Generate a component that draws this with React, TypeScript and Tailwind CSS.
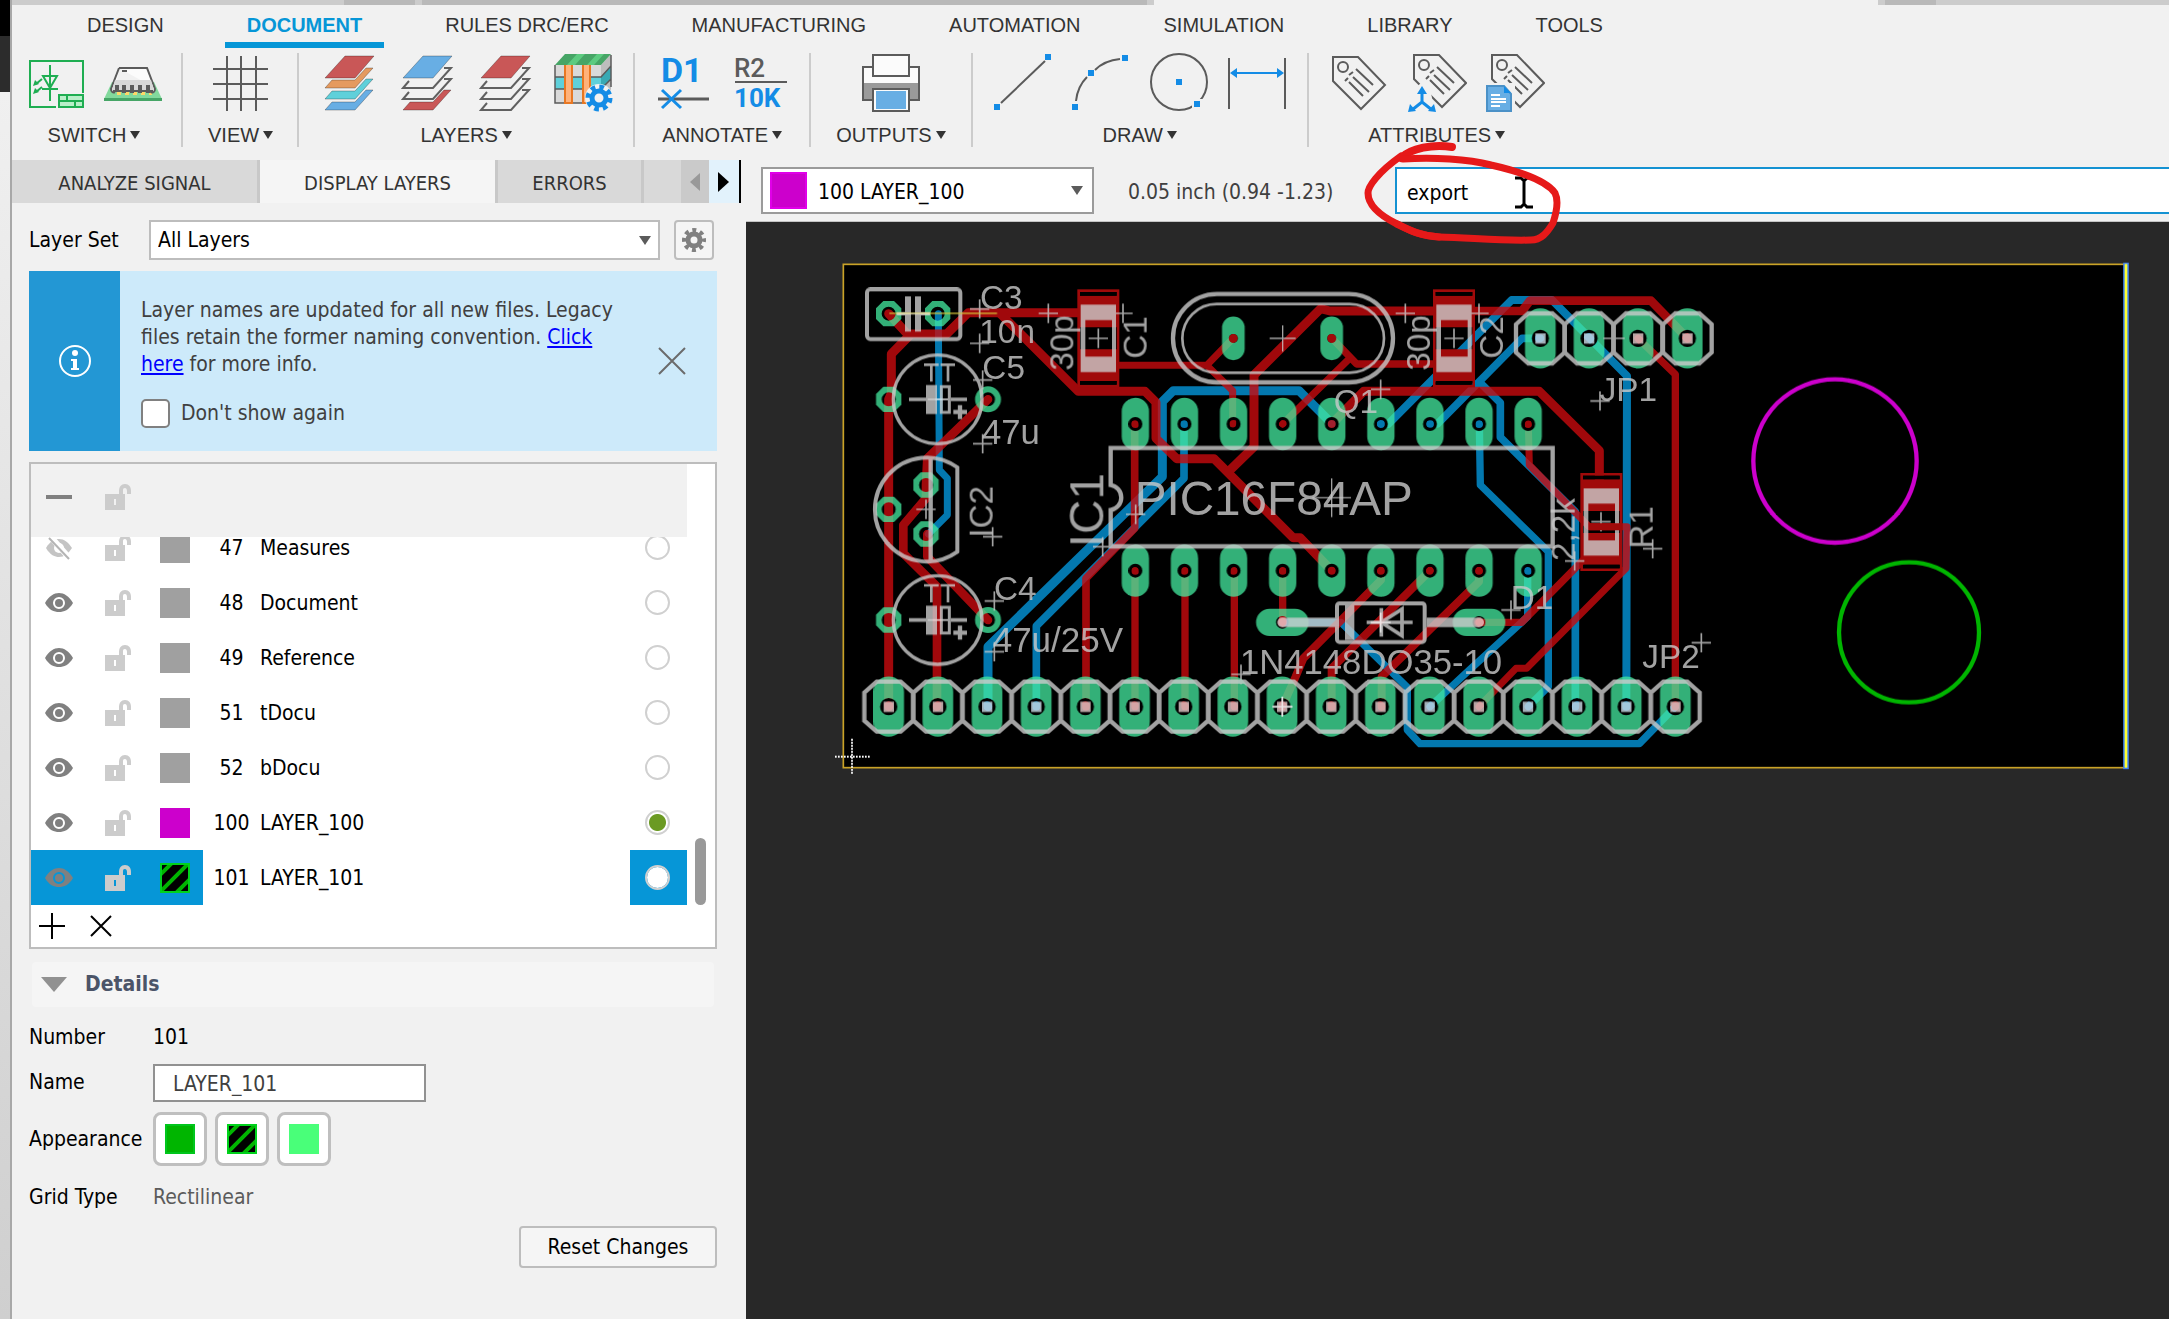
import type { ReactNode } from "react";
import clsx from "clsx";

const UI_FONT = "font-['DejaVu_Sans_Condensed','Noto_Sans',sans-serif]";
const RIBBON_FONT = "font-['Liberation_Sans',sans-serif]";

const ribbonTabs = [
  "DESIGN",
  "DOCUMENT",
  "RULES DRC/ERC",
  "MANUFACTURING",
  "AUTOMATION",
  "SIMULATION",
  "LIBRARY",
  "TOOLS",
];

const layers = [
  { id: 47, name: "Measures", color: "bg-[#a0a0a0]", hidden: true },
  { id: 48, name: "Document", color: "bg-[#a0a0a0]" },
  { id: 49, name: "Reference", color: "bg-[#a0a0a0]" },
  { id: 51, name: "tDocu", color: "bg-[#a0a0a0]" },
  { id: 52, name: "bDocu", color: "bg-[#a0a0a0]" },
  { id: 100, name: "LAYER_100", color: "bg-[#cc00cc]", active: true },
  { id: 101, name: "LAYER_101", color: "", selected: true },
];

/* ---------- Ribbon icons ---------- */

function Icon({ children }: { children: ReactNode }) {
  return (
    <svg viewBox="0 0 60 60" className="block size-[60px]" fill="none" aria-hidden="true">
      {children}
    </svg>
  );
}

function SchematicIcon() {
  return (
    <Icon>
      <g stroke="#1fae52" strokeWidth="2">
        <path d="M31 54H5V8H58V40" />
        <path d="M25 12V48M17 36H33M18 23H32L25 35Z" />
        <rect x="34" y="42" width="24" height="12" fill="#b9efc9" />
        <path d="M34 48H58M42 42V48M50 48V54" />
        <path d="M17 26L11 31M17 34L11 39" />
      </g>
      <path d="M8 33L10 27L14 31ZM8 41L10 35L14 39Z" fill="#1fae52" />
    </Icon>
  );
}

function BoardIcon() {
  return (
    <Icon>
      <path d="M9 29H51L59 46V48H1V46Z" fill="#82d99c" />
      <path d="M1 45H59V48H1Z" fill="#46a566" />
      <path d="M14 36V42H18V36M22 36V42H26V36M30 36V42H34V36M38 36V42H42V36M46 36V42H49V36" fill="#ffd766" />
      <path
        d="M16 15H44L52 36C52 39 50 40 48 39V33M16 15L8 36C8 39 10 40 12 39"
        fill="#fbfbfb"
        stroke="#5b5b5b"
        strokeWidth="2"
      />
      <path d="M12 27H48L51 37H9Z" fill="#d8d8d8" />
      <path d="M14 32V39M21 32V40M29 32V40M37 32V40M45 32V40" stroke="#5b5b5b" strokeWidth="4" />
      <path d="M10 38H50" stroke="#5b5b5b" strokeWidth="2" />
      <path d="M19 18H24" stroke="#5b5b5b" strokeWidth="2" />
    </Icon>
  );
}

function GridIcon() {
  return (
    <Icon>
      <path d="M16 3V58M30 3V58M45 3V58M2 16H57M2 31H57M2 46H57" stroke="#5b5b5b" strokeWidth="2" />
    </Icon>
  );
}

const SHEET_LINE = "#606060";

function LayersIcon({ fills }: { fills: string[] }) {
  const [top, ...rest] = fills;
  return (
    <Icon>
      {rest.map((fill, i) => (
        <path
          key={i}
          transform={`translate(0 ${i * 11})`}
          d={
            fill === "none"
              ? "M12 28L6 35H36L54 15H47"
              : "M13 27L6 35H36L54 15H47L36 27Z"
          }
          fill={fill}
          stroke={fill === "none" ? SHEET_LINE : "#00000044"}
          strokeWidth={fill === "none" ? 2 : 1}
        />
      ))}
      <path d="M6 25L26 3H55L36 25Z" fill={top} stroke="#00000044" strokeWidth="1" />
    </Icon>
  );
}

function StackIcon() {
  return (
    <Icon>
      <path d="M2 12H48V50H2Z" fill="#d9d9d9" />
      <path d="M48 12L58 1V38L48 50Z" fill="#bdbdbd" />
      <path d="M2 24H48V36H2Z" fill="#5fd0da" />
      <path d="M48 24L58 13V26L48 36Z" fill="#39a9b4" />
      <path d="M2 12V50H48M2 24H48L58 13M2 36H48L58 26M58 2V34" stroke="#5b5b5b" strokeWidth="1.5" />
      <path d="M12 12V50H19V12M30 12V50H37V12" fill="#ffb27a" stroke="#e87722" strokeWidth="2" />
      <path d="M2 12L12 1H58L48 12Z" fill="#46a566" />
      <path d="M14 12L24 1H32L22 12ZM34 12L44 1H51L41 12Z" fill="#5ccb80" />
      <circle cx="46" cy="45" r="14" fill="#f1f1f1" />
      <circle cx="46" cy="45" r="7" stroke="#148ce6" strokeWidth="5" />
      <circle cx="46" cy="45" r="11" stroke="#148ce6" strokeWidth="5" strokeDasharray="4.6 4.04" />
    </Icon>
  );
}

function NameIcon() {
  return (
    <Icon>
      <text x="8" y="29" fontFamily="Roboto, sans-serif" fontSize="34" fontWeight="700" fill="#148ce6">
        D1
      </text>
      <path d="M5 46H56" stroke="#5b5b5b" strokeWidth="3" />
      <path d="M9 37L28 55M28 37L9 55" stroke="#148ce6" strokeWidth="3" />
    </Icon>
  );
}

function ValueIcon() {
  return (
    <Icon>
      <text x="3" y="24" fontFamily="Roboto, sans-serif" fontSize="26" fontWeight="500" fill="#5b5b5b">
        R2
      </text>
      <path d="M4 29H56" stroke="#5b5b5b" strokeWidth="2" />
      <text x="3" y="54" fontFamily="Roboto, sans-serif" fontSize="26" fontWeight="700" fill="#148ce6">
        10K
      </text>
    </Icon>
  );
}

function PrinterIcon() {
  return (
    <Icon>
      <path d="M2 14H58V47H2Z" fill="#fbfbfb" />
      <path d="M2 30H58V47H2Z" fill="#9a9a9a" />
      <path d="M12 14H2V47H12M48 47H58V14H48" stroke="#5b5b5b" strokeWidth="2" />
      <rect x="12" y="2" width="36" height="21" fill="#fbfbfb" stroke="#5b5b5b" strokeWidth="2" />
      <rect x="12" y="36" width="36" height="22" fill="#fbfbfb" stroke="#5b5b5b" strokeWidth="2" />
      <rect x="15" y="38" width="30" height="18" fill="#68aee4" />
    </Icon>
  );
}

function LineIcon() {
  return (
    <Icon>
      <path d="M8 50L52 8" stroke="#5b5b5b" strokeWidth="2" />
      <path d="M1 51H7V57H1ZM52 1H58V7H52Z" fill="#148ce6" />
    </Icon>
  );
}

function ArcIcon() {
  return (
    <Icon>
      <path d="M5 48C6 38 10 30 16 24M24 17C30 11 38 7 49 6" stroke="#5b5b5b" strokeWidth="2" />
      <path d="M1 51H7V57H1ZM17 17H23V23H17ZM51 2H57V8H51Z" fill="#148ce6" />
    </Icon>
  );
}

function CircleIcon() {
  return (
    <Icon>
      <circle cx="30" cy="29" r="28" stroke="#5b5b5b" strokeWidth="2" />
      <rect x="43" y="46" width="11" height="11" fill="#f1f1f1" />
      <path d="M27 26H33V32H27ZM45 48H51V54H45Z" fill="#148ce6" />
    </Icon>
  );
}

function DimensionIcon() {
  return (
    <Icon>
      <path d="M2 5V56M58 5V56" stroke="#5b5b5b" strokeWidth="2" />
      <path d="M6 20H54" stroke="#148ce6" strokeWidth="2" />
      <path d="M3 20L10 15V25ZM57 20L50 15V25Z" fill="#148ce6" />
    </Icon>
  );
}

function TagShape() {
  return (
    <g stroke="#5b5b5b" strokeWidth="2">
      <path d="M4 4H29L56 32L32 56L4 28Z" />
      <circle cx="14" cy="14" r="5" />
      <path d="M27 16L44 32M20 22L24 19M16 28L19 25M24 24L40 39M20 29L34 43" />
    </g>
  );
}

function TagIcon() {
  return (
    <Icon>
      <TagShape />
    </Icon>
  );
}

function TagTreeIcon() {
  return (
    <Icon>
      <g transform="translate(3 -2)">
        <TagShape />
      </g>
      <path d="M3 40L14 30L24 40L28 60H0Z" fill="#f1f1f1" />
      <path d="M15 38V49L5 57M15 49L25 57" stroke="#148ce6" strokeWidth="3" />
      <path d="M15 33L20 41H10ZM1 59L3 51L9 58ZM29 59L27 51L21 58Z" fill="#148ce6" />
    </Icon>
  );
}

function TagDocIcon() {
  return (
    <Icon>
      <g transform="translate(3 -2)">
        <TagShape />
      </g>
      <path d="M0 30H30V60H0Z" fill="#f1f1f1" />
      <path d="M2 33H19L26 41V58H2Z" fill="#68aee4" stroke="#4b91c7" strokeWidth="2" />
      <path d="M19 33L26 40H19Z" fill="#148ce6" />
      <path d="M6 42H15M6 46H21M6 49H21M6 53H15" stroke="#ffffff" strokeWidth="2" />
    </Icon>
  );
}

/* ---------- Ribbon ---------- */

function RibbonGroup({
  label,
  className,
  children,
}: {
  label: string;
  className: string;
  children: ReactNode;
}) {
  return (
    <section className={clsx("flex flex-col items-center", className)}>
      <div className="flex gap-[18px]">{children}</div>
      <button
        type="button"
        className="mt-[10px] flex items-center gap-1 text-[20px] leading-6 text-[#333]"
      >
        {label}
        <span className="border-x-[5px] border-t-8 border-x-transparent border-t-[#333]" />
      </button>
    </section>
  );
}

function Tool({ label, children }: { label: string; children: ReactNode }) {
  return (
    <button type="button" aria-label={label} className="block">
      {children}
    </button>
  );
}

function Ribbon() {
  return (
    <header className={clsx("bg-[#f1f1f1]", RIBBON_FONT)}>
      {/* Bottom edge of the document tabs above the ribbon */}
      <div className="flex h-[5px]">
        <div className="w-[332px] bg-[#cccccc]" />
        <div className="w-[71px] bg-[#b9b9b9]" />
        <div className="w-[7px] bg-[#cccccc]" />
        <div className="w-[725px] bg-[#b9b9b9]" />
        <div className="w-[7px] bg-[#cccccc]" />
        <div className="w-[724px]" />
        <div className="w-[7px] bg-[#cccccc]" />
        <div className="w-[51px] bg-[#b9b9b9]" />
        <div className="flex-1 bg-[#cccccc]" />
      </div>

      <nav className="flex h-[43px] gap-[39px] pl-[53px]">
        {ribbonTabs.map((tab) => (
          <button
            key={tab}
            type="button"
            className={clsx(
              "shrink-0 border-b-[6px] px-[22px] pt-[2px] text-[20px] leading-6",
              tab === "DOCUMENT"
                ? "border-[#0696d7] font-bold text-[#0696d7]"
                : "border-transparent text-[#333]"
            )}
          >
            {tab}
          </button>
        ))}
      </nav>

      <div className="mt-[5px] mb-[13px] flex h-[94px] divide-x-2 divide-[#cccccc]">
        <RibbonGroup label="SWITCH" className="pr-[18px] pl-[13px]">
          <Tool label="Switch to schematic">
            <SchematicIcon />
          </Tool>
          <Tool label="Switch to 3D board">
            <BoardIcon />
          </Tool>
        </RibbonGroup>
        <RibbonGroup label="VIEW" className="pr-6 pl-[25px]">
          <Tool label="Grid">
            <GridIcon />
          </Tool>
        </RibbonGroup>
        <RibbonGroup label="LAYERS" className="px-5">
          <Tool label="All layers">
            <LayersIcon fills={["#c95757", "#e59a5f", "#5fd0da", "#68aee4"]} />
          </Tool>
          <Tool label="Bottom layer">
            <LayersIcon fills={["#68aee4", "none", "none", "#c95757"]} />
          </Tool>
          <Tool label="Top layer">
            <LayersIcon fills={["#c95757", "none", "none", "none"]} />
          </Tool>
          <Tool label="Layer stack">
            <StackIcon />
          </Tool>
        </RibbonGroup>
        <RibbonGroup label="ANNOTATE" className="px-[18px]">
          <Tool label="Name">
            <NameIcon />
          </Tool>
          <Tool label="Value">
            <ValueIcon />
          </Tool>
        </RibbonGroup>
        <RibbonGroup label="OUTPUTS" className="px-[25px]">
          <Tool label="Print">
            <PrinterIcon />
          </Tool>
        </RibbonGroup>
        <RibbonGroup label="DRAW" className="px-5">
          <Tool label="Line">
            <LineIcon />
          </Tool>
          <Tool label="Arc">
            <ArcIcon />
          </Tool>
          <Tool label="Circle">
            <CircleIcon />
          </Tool>
          <Tool label="Dimension">
            <DimensionIcon />
          </Tool>
        </RibbonGroup>
        <RibbonGroup label="ATTRIBUTES" className="px-5">
          <Tool label="Attribute">
            <TagIcon />
          </Tool>
          <Tool label="Global attributes">
            <TagTreeIcon />
          </Tool>
          <Tool label="Attribute document">
            <TagDocIcon />
          </Tool>
        </RibbonGroup>
      </div>
    </header>
  );
}

/* ---------- Layer panel ---------- */

function Caret({ className }: { className?: string }) {
  return (
    <span
      className={clsx(
        "pointer-events-none border-x-[6px] border-t-[9px] border-x-transparent border-t-[#5b5b5b]",
        className
      )}
    />
  );
}

function EyeIcon({ hidden }: { hidden?: boolean }) {
  if (hidden) {
    return (
      <svg viewBox="0 0 30 30" className="block size-[30px]" fill="none" aria-hidden="true">
        <path d="M2 15C6 8 11 6 15 6C20 6 24 9 28 15C24 21 20 24 15 24C11 24 6 22 2 15Z" fill="#c4c4c4" />
        <circle cx="15" cy="15" r="5" fill="#fff" />
        <path d="M6 3L27 27" stroke="#fff" strokeWidth="6" />
        <path d="M5 5L25 26" stroke="#b4b4b4" strokeWidth="2" />
      </svg>
    );
  }
  return (
    <svg viewBox="0 0 30 30" className="block size-[30px]" aria-hidden="true">
      <path
        d="M1 15C5 8 10 5 15 5S25 8 29 15C25 22 20 24 15 24S5 22 1 15ZM15 9A6 6 0 1 0 15 21A6 6 0 1 0 15 9ZM15 11A4 4 0 1 1 15 19A4 4 0 1 1 15 11Z"
        fill="#808080"
        fillRule="evenodd"
      />
    </svg>
  );
}

function LockIcon() {
  return (
    <svg viewBox="0 0 26 26" className="block size-[26px]" aria-hidden="true">
      <path
        d="M0 10H14V7C14 3 16 0 20 0C24 0 26 3 26 7V10H22V7C22 5 21 4 20 4C18 4 18 5 18 7V10H20V26H0ZM9 15V21H11V15Z"
        fill="#cccccc"
        fillRule="evenodd"
      />
    </svg>
  );
}

function HatchSwatch() {
  return (
    <svg viewBox="0 0 30 30" className="block size-[30px]" aria-hidden="true">
      <rect width="30" height="30" />
      <path d="M-2 14L14 -2M-2 31L31 -2M14 32L32 14" stroke="#00b500" strokeWidth="4" />
      <rect x="1" y="1" width="28" height="28" fill="none" stroke="#00d21c" strokeWidth="2" />
    </svg>
  );
}

function GearIcon() {
  return (
    <svg viewBox="0 0 24 24" className="block size-6" fill="none" aria-hidden="true">
      <circle cx="12" cy="12" r="6" stroke="#808080" strokeWidth="5" />
      <circle cx="12" cy="12" r="10" stroke="#808080" strokeWidth="4" strokeDasharray="4 3.85" strokeDashoffset="2" />
    </svg>
  );
}

function PanelTabs() {
  return (
    <div className="flex h-[43px] bg-[#d9d9d9] text-[20px] leading-[43px] text-[#333]">
      <button type="button" className="w-[248px] border-r-[3px] border-[#c8c8c8] bg-[#d9d9d9] pt-[2px]">
        ANALYZE SIGNAL
      </button>
      <button type="button" className="w-[235px] bg-[#f5f5f5] pt-[2px]">
        DISPLAY LAYERS
      </button>
      <button type="button" className="w-[149px] border-x-[3px] border-[#c8c8c8] pt-[2px]">
        ERRORS
      </button>
      <div className="flex-1" />
      <button
        type="button"
        aria-label="Scroll tabs left"
        className="flex w-7 items-center justify-center bg-[#cacaca]"
      >
        <span className="border-y-[9px] border-r-[10px] border-y-transparent border-r-[#999]" />
      </button>
      <button
        type="button"
        aria-label="Scroll tabs right"
        className="flex w-8 items-center border-r-2 border-black bg-[#e2f2fc] pl-[9px]"
      >
        <span className="border-y-[10px] border-l-[11px] border-y-transparent border-l-black" />
      </button>
      <div className="w-[5px] bg-[#f1f1f1]" />
    </div>
  );
}

function LayerRow({ layer }: { layer: (typeof layers)[number] }) {
  const tint = layer.selected ? "bg-[#0696d7]" : "";
  return (
    <tr className="h-[55px]">
      <td className={clsx("w-[74px] pl-[13px]", tint)}>
        <button type="button" aria-label={`Toggle visibility of ${layer.name}`} className="block">
          <EyeIcon hidden={layer.hidden} />
        </button>
      </td>
      <td className={clsx("w-[55px]", tint)}>
        <button type="button" aria-label={`Lock ${layer.name}`} className="block">
          <LockIcon />
        </button>
      </td>
      <td className={clsx("w-[43px]", tint)}>
        {layer.selected ? <HatchSwatch /> : <div className={clsx("size-[30px]", layer.color)} />}
      </td>
      <td className="w-[57px] pt-[2px] text-center">{layer.id}</td>
      <td className="pt-[2px]">{layer.name}</td>
      <td className={clsx("w-[57px] pr-[2px]", tint)}>
        <input
          type="radio"
          name="active-layer"
          aria-label={`Use ${layer.name}`}
          defaultChecked={layer.active}
          className="mx-auto block size-[25px] appearance-none rounded-full border-2 border-[#d0d0d0] bg-white bg-clip-padding checked:bg-[radial-gradient(circle,#6b9a23_8px,white_9px)]"
        />
      </td>
    </tr>
  );
}

function InfoBanner() {
  return (
    <div className="mt-[11px] flex h-[180px] bg-[#cdeafa]">
      <div className="flex w-[91px] items-center justify-center bg-[#2397d4]">
        <svg viewBox="0 0 34 34" className="size-[34px]" fill="none" aria-hidden="true">
          <circle cx="17" cy="17" r="15" stroke="#fff" strokeWidth="2" />
          <circle cx="17" cy="9" r="3" fill="#fff" />
          <path d="M13 15H19V24H21V26H13V24H15V17H13Z" fill="#fff" />
        </svg>
      </div>
      <div className="flex-1 pt-[26px] pl-[21px] text-[#404040]">
        <p className="max-w-[488px] leading-[27px]">
          Layer names are updated for all new files. Legacy files retain the former naming
          convention.{" "}
          <a href="#naming" className="text-[#0000ff] underline">
            Click here
          </a>{" "}
          for more info.
        </p>
        <label className="mt-5 flex items-center gap-[11px] leading-[30px]">
          <input
            type="checkbox"
            className="size-[29px] appearance-none rounded-[5px] border-2 border-[#808080] bg-white"
          />
          Don't show again
        </label>
      </div>
      <button type="button" aria-label="Close" className="mr-[31px]">
        <svg viewBox="0 0 28 28" className="size-7" aria-hidden="true">
          <path d="M1 1L27 27M27 1L1 27" stroke="#6b6b6b" strokeWidth="2" />
        </svg>
      </button>
    </div>
  );
}

function LayerTable() {
  return (
    <div className="mt-[11px] border-2 border-[#bdbdbd] bg-white">
      <div className="flex text-black">
        <div className="flex-1">
          <div className="flex h-[73px] items-center bg-[#f1f1f1] pl-[15px]">
            <button type="button" aria-label="Hide all" className="-mt-2 h-1 w-[26px] bg-[#808080]" />
            <button type="button" aria-label="Unlock all" className="-mt-2 ml-[33px]">
              <LockIcon />
            </button>
          </div>
          {/* Scrolled to the end of the list */}
          <div className="flex h-[368px] flex-col justify-end overflow-hidden">
            <table className="w-full shrink-0 border-collapse">
              <tbody>
                {layers.map((layer) => (
                  <LayerRow key={layer.id} layer={layer} />
                ))}
              </tbody>
            </table>
          </div>
        </div>
        <div className="flex w-7 flex-col justify-end pl-2">
          <div className="h-[67px] w-[11px] rounded-full bg-[#999]" />
        </div>
      </div>
      <div className="flex h-[42px] items-center gap-[25px] pl-2">
        <button type="button" aria-label="Add layer">
          <svg viewBox="0 0 26 26" className="block size-[26px]" aria-hidden="true">
            <path d="M13 0V26M0 13H26" stroke="#000" strokeWidth="2" />
          </svg>
        </button>
        <button type="button" aria-label="Delete layer">
          <svg viewBox="0 0 22 22" className="block size-[22px]" aria-hidden="true">
            <path d="M1 1L21 21M21 1L1 21" stroke="#000" strokeWidth="2" />
          </svg>
        </button>
      </div>
    </div>
  );
}

function Details() {
  const swatch =
    "flex size-[54px] items-center justify-center rounded-lg border-[3px] border-[#bfbfbf] bg-white";
  return (
    <section>
      <button
        type="button"
        className="mx-[3px] mt-[13px] flex h-[45px] w-[682px] items-center gap-[18px] rounded bg-[#f5f5f5] pl-[9px] font-bold text-[#4b5468]"
      >
        <span className="border-x-[13px] border-t-[15px] border-x-transparent border-t-[#919191]" />
        Details
      </button>
      <div className="mt-[14px] grid grid-cols-[124px_1fr] items-center text-black">
        <span className="leading-8">Number</span>
        <span className="leading-8">101</span>
        <label htmlFor="layer-name" className="mt-[11px]">
          Name
        </label>
        <input
          id="layer-name"
          defaultValue="LAYER_101"
          className="mt-[11px] h-[38px] w-[273px] border-2 border-[#919191] bg-white px-[18px] pt-[2px] text-[#404040]"
        />
        <span className="mt-[11px]">Appearance</span>
        <div className="mt-[10px] flex gap-2">
          <button type="button" aria-label="Solid" className={swatch}>
            <div className="size-[30px] border-2 border-[#00c61c] bg-[#00b500]" />
          </button>
          <button type="button" aria-label="Hatched" className={swatch}>
            <HatchSwatch />
          </button>
          <button type="button" aria-label="Light" className={swatch}>
            <div className="size-[30px] bg-[#49ff79]" />
          </button>
        </div>
        <span className="mt-[15px] leading-8">Grid Type</span>
        <span className="mt-[15px] leading-8 text-[#5b5b5b]">Rectilinear</span>
      </div>
      <div className="mt-[13px] flex justify-end">
        <button
          type="button"
          className="h-[42px] w-[198px] rounded-sm border-2 border-[#bdbdbd] bg-[#f5f5f5] pt-[2px] text-black"
        >
          Reset Changes
        </button>
      </div>
    </section>
  );
}

function LayerPanel() {
  return (
    <aside className="w-[734px] shrink-0 bg-[#f1f1f1]">
      <PanelTabs />
      <div className="pt-[17px] pr-[29px] pl-[17px] text-[21px]">
        <div className="flex items-center pr-[3px]">
          <label htmlFor="layer-set" className="w-[120px] pt-[2px] text-black">
            Layer Set
          </label>
          <div className="relative flex-1">
            <select
              id="layer-set"
              className="block h-10 w-full appearance-none border-2 border-[#bdbdbd] bg-white px-[7px] pt-[2px] text-black"
            >
              <option>All Layers</option>
            </select>
            <Caret className="absolute top-4 right-[9px]" />
          </div>
          <button
            type="button"
            aria-label="Layer set options"
            className="ml-[14px] flex size-10 items-center justify-center rounded-sm border-2 border-[#bdbdbd] bg-[#f5f5f5]"
          >
            <GearIcon />
          </button>
        </div>
        <InfoBanner />
        <LayerTable />
        <Details />
      </div>
    </aside>
  );
}

/* ---------- Board drawing ---------- */

const bluePaths = [
  { w: 21, d: "M325 191L328 660L352 685V795L295 852" },
  { w: 27, d: "M474 1370V1190L997 680V455L1030 422H1407L1505 520" },
  { w: 23, d: "M619 1370V1128L1062 685V522" },
  { w: 24, d: "M1652 522H1675L2045 150H2166L2391 378L2389 1370" },
  { w: 23, d: "M1800 522H1822L2076 265H2131" },
  { w: 23, d: "M1952 400L2011 458V562L2236 785V1370" },
  { w: 22, d: "M1948 522L1951 705L2155 905V1310L2095 1370" },
  { w: 22, d: "M2093 962V1100L1920 1258L1800 1370" },
  { w: 22, d: "M1357 1117H1533L1732 1312V1440L1770 1481H2428L2536 1370" },
];

const redPaths = [
  { w: 27, d: "M176 191L232 252H350L415 188H745" },
  { w: 27, d: "M240 255L184 312V430L176 448V1370" },
  { w: 27, d: "M510 190L745 424H945L978 457V565L1040 626H1152L1389 863H1410L1505 962" },
  { w: 26, d: "M474 448L292 625L288 705V745L220 825V910L321 1010V1370" },
  { w: 26, d: "M292 852V920L474 1110" },
  { w: 21, d: "M860 346H1130L1210 264M1130 346L1208 422V522" },
  { w: 22, d: "M1505 264L1580 342H1823M1554 330L1358 522" },
  { w: 27, d: "M1823 183H1500L1472 176L1272 375V590L1195 665" },
  { w: 26, d: "M1933 183H2076L2100 152H2463L2572 265" },
  { w: 22, d: "M2424 265L2536 373V1370" },
  { w: 27, d: "M1505 522L1601 424H2128L2308 602V690" },
  { w: 21, d: "M2095 522L2098 645L2277 830H2391L2388 955L2090 1255H2058L1947 1370" },
  { w: 23, d: "M768 1370V985L914 835V522" },
  { w: 22, d: "M915 962V1370M1065 962V1370M1213 962V1370M1358 962V1117" },
  { w: 24, d: "M1653 962V990L1420 1225L1397 1280L1357 1370" },
  { w: 24, d: "M1800 962L1505 1255V1370" },
  { w: 24, d: "M1947 962V995L1655 1280V1370" },
  { w: 22, d: "M1947 1117H2075L2270 920" },
];

const boardTexts = [
  { t: "C3", x: 450, y: 178 },
  { t: "10n", x: 448, y: 278 },
  { t: "C5", x: 457, y: 388 },
  { t: "47u", x: 456, y: 583, size: 104 },
  { t: "C4", x: 492, y: 1050 },
  { t: "47u/25V", x: 488, y: 1205, size: 105 },
  { t: "Q1", x: 1511, y: 490 },
  { t: "JP1", x: 2309, y: 452 },
  { t: "D1", x: 2042, y: 1078 },
  { t: "JP2", x: 2437, y: 1253 },
  { t: "1N4148DO35-10", x: 1230, y: 1272, size: 104 },
  { t: "PIC16F84AP", x: 914, y: 795, size: 143 },
  { t: "30p", x: 730, y: 362, up: true },
  { t: "C1", x: 950, y: 326, up: true },
  { t: "IC2", x: 488, y: 863, up: true },
  { t: "IC1", x: 820, y: 892, size: 143, up: true },
  { t: "30p", x: 1800, y: 362, up: true },
  { t: "C2", x: 2019, y: 326, up: true },
  { t: "2,2k", x: 2234, y: 933, up: true },
  { t: "R1", x: 2468, y: 896, up: true },
];

const crosses = [
  [449, 177], [449, 280], [458, 390], [458, 581], [655, 190], [879, 190], [488, 860],
  [818, 890], [917, 793], [493, 1053], [493, 1205], [1233, 1273], [1726, 190], [1947, 190],
  [1652, 418], [2310, 453], [2234, 933], [2468, 896], [2043, 1080], [2614, 1178], [805, 265],
  [1872, 265], [2313, 815], [288, 778], [1357, 1370],
];

const PINS = Array.from({ length: 17 }, (_, i) => 176 + i * 147.5);
const BLUE_PINS = [2, 3, 11, 13, 14, 15];
const IC_PINS = Array.from({ length: 9 }, (_, i) => 916 + i * 147.3);
const JP1_PINS = [2131, 2277, 2424, 2572];

// Each pad is a ring, so the trace end stays visible in the hole
function Pad({ x, y, w, h, hole }: { x: number; y: number; w: number; h: number; hole: number }) {
  const r = Math.min(w, h) / 2;
  const dx = w / 2 - r;
  const dy = h / 2 - r;
  return (
    <path
      fillRule="evenodd"
      d={`M${x - w / 2} ${y - dy}A${r} ${r} 0 0 1 ${x - dx} ${y - h / 2}H${x + dx}A${r} ${r} 0 0 1 ${x + w / 2} ${y - dy}V${y + dy}A${r} ${r} 0 0 1 ${x + dx} ${y + h / 2}H${x - dx}A${r} ${r} 0 0 1 ${x - w / 2} ${y + dy}ZM${x - hole} ${y}A${hole} ${hole} 0 1 0 ${x + hole} ${y}A${hole} ${hole} 0 1 0 ${x - hole} ${y}Z`}
    />
  );
}

function OctagonPad({ x, y }: { x: number; y: number }) {
  return (
    <path
      transform={`translate(${x} ${y})`}
      fillRule="evenodd"
      d="M-38 -16L-16 -38H16L38 -16V16L16 38H-16L-38 16ZM-21 0A21 21 0 1 0 21 0A21 21 0 1 0 -21 0Z"
    />
  );
}

function ChipCopper({ x, y }: { x: number; y: number }) {
  return (
    <g transform={`translate(${x} ${y})`}>
      <rect x="-59" y="-143" width="118" height="286" fill="none" stroke="#a00a0a" strokeWidth="8" />
      <path d="M-59 -128H59V-33H-59ZM-59 33H59V128H-59Z" fill="#a00a0a" />
      <path d="M-55 -139H55V-128H-55ZM-55 128H55V139H-55Z" fill="#000" />
    </g>
  );
}

function ChipSilk({ x, y }: { x: number; y: number }) {
  return (
    <path
      transform={`translate(${x} ${y})`}
      d="M-53 -101H53V101H-53ZM-39 -55V55H41V-55Z"
      fill="#cbcbcb"
      fillRule="evenodd"
      stroke="none"
    />
  );
}

function ElectrolyticSilk({ y }: { y: number }) {
  return (
    <g transform={`translate(323 ${y})`}>
      <circle r="133" strokeWidth="10" />
      <path d="M-41 -104H3M-19 -104V-53M9 -104H52M31 -104V-53" strokeWidth="8" />
      <path d="M-35 -43H-2V44H-35Z" fill="#cbcbcb" stroke="none" />
      <rect x="11" y="-38" width="24" height="77" strokeWidth="9" />
      <path d="M-86 0H-35M39 0H88" strokeWidth="11" />
      <path d="M47 38H88M67 17V59" strokeWidth="13" />
      <path d="M-30 0H31" stroke="#ffffff" strokeWidth="5" />
    </g>
  );
}

function HeaderSilk({ x, y }: { x: number; y: number }) {
  return (
    <path
      transform={`translate(${x} ${y})`}
      d="M-73 -42L-36 -75H36L73 -42V42L36 75H-36L-73 42Z"
      strokeWidth="13"
    />
  );
}

function Board() {
  return (
    <svg
      viewBox="0 0 4020 1590"
      className="block w-[1340px] shrink-0"
      fill="none"
      role="img"
      aria-label="PCB layout"
    >
      <rect x="40" y="43" width="3848" height="1510" fill="#000" stroke="#c9a227" strokeWidth="5" />

      <g stroke="#0496db" opacity="0.8" strokeLinejoin="round" strokeLinecap="round">
        {bluePaths.map((p) => (
          <path key={p.d} d={p.d} strokeWidth={p.w} />
        ))}
      </g>
      <g stroke="#c80b0e" opacity="0.8" strokeLinejoin="round" strokeLinecap="round">
        {redPaths.map((p) => (
          <path key={p.d} d={p.d} strokeWidth={p.w} />
        ))}
      </g>
      <ChipCopper x={805} y={265} />
      <ChipCopper x={1872} y={265} />
      <ChipCopper x={2314} y={816} />

      {/* Hole walls: dark ring around the trace end */}
      <g stroke="#000" strokeWidth="10">
        {PINS.map((x) => (
          <circle key={x} cx={x} cy="1370" r="21" />
        ))}
        {JP1_PINS.map((x) => (
          <circle key={x} cx={x} cy="265" r="21" />
        ))}
        {IC_PINS.map((x) => (
          <g key={x}>
            <circle cx={x} cy="522" r="17" />
            <circle cx={x} cy="962" r="17" />
          </g>
        ))}
      </g>

      <g fill="#44eba0" opacity="0.75">
        {PINS.map((x) => (
          <Pad key={x} x={x} y={1370} w={92} h={181} hole={26} />
        ))}
        {JP1_PINS.map((x) => (
          <Pad key={x} x={x} y={265} w={92} h={181} hole={26} />
        ))}
        {IC_PINS.map((x) => (
          <g key={x}>
            <Pad x={x} y={522} w={82} h={157} hole={21} />
            <Pad x={x} y={962} w={82} h={157} hole={21} />
          </g>
        ))}
        <Pad x={1210} y={265} w={68} h={131} hole={13} />
        <Pad x={1505} y={265} w={68} h={131} hole={13} />
        <Pad x={1357} y={1117} w={158} h={82} hole={19} />
        <Pad x={1947} y={1117} w={158} h={82} hole={19} />
        <Pad x={474} y={448} w={78} h={78} hole={21} />
        <Pad x={474} y={1110} w={78} h={78} hole={21} />
        <OctagonPad x={176} y={191} />
        <OctagonPad x={323} y={191} />
        <OctagonPad x={176} y={448} />
        <OctagonPad x={288} y={705} />
        <OctagonPad x={176} y={778} />
        <OctagonPad x={288} y={852} />
        <OctagonPad x={176} y={1110} />
      </g>
      <g fill="#a00a0a">
        <circle cx="1210" cy="265" r="13" />
        <circle cx="1505" cy="265" r="13" />
      </g>

      <g stroke="#cbcbcb" opacity="0.8">
        {PINS.map((x) => (
          <HeaderSilk key={x} x={x} y={1370} />
        ))}
        {JP1_PINS.map((x) => (
          <HeaderSilk key={x} x={x} y={265} />
        ))}
        <g stroke="none">
          {PINS.map((x, i) => (
            <rect
              key={x}
              x={x - 15}
              y="1355"
              width="31"
              height="31"
              fill={BLUE_PINS.includes(i) ? "#cbdbe6" : "#e2cbcb"}
            />
          ))}
          {JP1_PINS.map((x, i) => (
            <rect key={x} x={x - 15} y="250" width="31" height="31" fill={i < 2 ? "#cbdbe6" : "#e2cbcb"} />
          ))}
        </g>

        {/* C3 */}
        <rect x="111" y="118" width="280" height="149" rx="10" strokeWidth="12" />
        <path d="M225 139H243V245H225ZM255 139H273V245H255Z" fill="#cbcbcb" stroke="none" />
        <path d="M200 191H225M273 191H300" strokeWidth="10" />

        <ElectrolyticSilk y={448} />
        <ElectrolyticSilk y={1110} />

        {/* IC2 */}
        <path d="M382 652A156 156 0 1 0 382 905Z" strokeWidth="12" />
        <path d="M302 620V935" strokeWidth="13" />

        <ChipSilk x={805} y={265} />
        <ChipSilk x={1872} y={265} />
        <ChipSilk x={2314} y={816} />

        {/* Q1 crystal */}
        <rect x="1029" y="132" width="660" height="265" rx="132" strokeWidth="13" />
        <rect x="1057" y="162" width="605" height="206" rx="103" strokeWidth="8" />
        <path d="M1319 265H1397M1358 226V305M2320 265H2384M2352 233V297" strokeWidth="4" />

        {/* IC1 */}
        <path d="M842 594H2168V889H842V780A38 38 0 0 0 842 705Z" strokeWidth="13" />
        <path d="M1447 743H1563M1505 685V801" strokeWidth="4" />

        {/* D1 */}
        <rect x="1521" y="1060" width="263" height="116" rx="8" strokeWidth="12" />
        <path d="M1545 1066H1573V1170H1545Z" fill="#cbcbcb" stroke="none" />
        <path d="M1357 1117H1515M1790 1117H1947" strokeWidth="29" />
        <circle cx="1357" cy="1117" r="15" fill="#f0cccc" stroke="none" />
        <circle cx="1947" cy="1117" r="15" fill="#f0cccc" stroke="none" />
        <path d="M1716 1077V1157L1654 1117ZM1654 1074V1160M1610 1117H1748" strokeWidth="11" />

        {crosses.map(([x, y]) => (
          <path key={`${x}-${y}`} d={`M${x - 29} ${y}H${x + 29}M${x} ${y - 29}V${y + 29}`} strokeWidth="5" />
        ))}
      </g>

      {/* R1 feed runs over the chip outline */}
      <path d="M2277 830H2375" stroke="#a00a0a" strokeWidth="21" />

      <g fill="#cbcbcb" opacity="0.8" fontFamily="Liberation Sans, Arial, sans-serif">
        {boardTexts.map(({ t, x, y, size = 100, up }) => (
          <text
            key={`${t}-${x}`}
            fontSize={size}
            transform={`translate(${x} ${y})${up ? " rotate(-90)" : ""}`}
          >
            {t}
          </text>
        ))}
      </g>

      <path d="M178 190H501" stroke="#d8c83a" strokeWidth="5" opacity="0.8" />
      <path d="M200 191H300" stroke="#ffffff" strokeWidth="5" opacity="0.5" />
      <path d="M1327 1370H1388M1357 1340V1400M1622 1117H1682M1652 1087V1147" stroke="#fff" strokeWidth="5" opacity="0.7" />

      <circle cx="3015" cy="633" r="245" stroke="#cc00cc" strokeWidth="13" />
      <circle cx="3237" cy="1147" r="210" stroke="#00b500" strokeWidth="13" />
      <path d="M3888 38V1557" stroke="#3d7ff0" strokeWidth="17" />
      <path d="M3888 42V1553" stroke="#ffff30" strokeWidth="8" />
      <path d="M15 1520H120M66 1467V1574" stroke="#fff" strokeWidth="6" strokeDasharray="5 4" />
    </svg>
  );
}

/* ---------- Workspace ---------- */

function CommandBar() {
  return (
    <div className="flex h-[62px] items-center border-b border-[#c4c4c4] bg-[#f1f1f1] pl-[15px] text-[21px]">
      <div className="relative flex h-[47px] w-[333px] items-center border-2 border-[#9b9b9b] bg-white pl-[7px]">
        <div className="size-[37px] shrink-0 border-2 border-[#e000e8] bg-[#cc00cc]" />
        <select
          aria-label="Active layer"
          className="h-full flex-1 appearance-none bg-transparent pt-1 pl-[11px] text-black"
        >
          <option>100 LAYER_100</option>
        </select>
        <Caret className="absolute top-[17px] right-[9px]" />
      </div>
      <span className="w-[301px] pt-1 pl-[34px] text-[#404040]">0.05 inch (0.94 -1.23)</span>
      <div className="relative flex-1">
        <input
          aria-label="Command line"
          defaultValue="export"
          className="block h-[47px] w-full border-2 border-r-0 border-[#1492d2] bg-white pt-1 pl-[10px] text-black outline-none"
        />
        {/* Pointer and hand-drawn ring over the command line */}
        <svg
          viewBox="0 0 200 110"
          className="pointer-events-none absolute -top-7 -left-8 h-[110px] w-[200px]"
          fill="none"
          aria-hidden="true"
        >
          <path d="M152 39H158L161 42L164 39H170M161 42V65M152 68H158L161 65L164 68H170" stroke="#000" strokeWidth="3" />
          <g stroke="#e61919" strokeLinecap="round" strokeLinejoin="round">
            <path d="M89 8C70 5 48 9 38 19" strokeWidth="8" />
            <path d="M38 17C14 34 5 48 5 54C5 66 18 77 34 85C50 93 60 97 76 98" strokeWidth="7" />
            <path d="M40 20C70 18 105 20 128 26C150 31 182 40 192 54C196 62 194 72 190 84C184 94 178 101 168 101C140 102 110 99 76 98C56 97 44 90 34 85" strokeWidth="7" />
          </g>
        </svg>
      </div>
    </div>
  );
}

function Workspace() {
  return (
    <main className="flex min-w-0 flex-1 flex-col">
      <CommandBar />
      <div className="flex flex-1 overflow-hidden bg-[#282828] pt-7 pl-[84px]">
        <div className="min-w-0">
          <Board />
        </div>
      </div>
    </main>
  );
}

export default function App() {
  return (
    <div className={clsx("flex min-h-screen bg-white pr-px pb-px", UI_FONT)}>
      {/* Sliver of the window behind */}
      <div className="flex w-3 shrink-0 flex-col border-r-2 border-[#a8a8a8]">
        <div className="h-9 bg-black" />
        <div className="h-14 bg-[#2c2c2c]" />
        <div className="flex-1 bg-linear-to-b from-[#f0f0f0] to-[#cfcfcf]" />
      </div>
      <div className="flex min-w-0 flex-1 flex-col">
        <Ribbon />
        <div className="flex flex-1">
          <LayerPanel />
          <Workspace />
        </div>
      </div>
    </div>
  );
}
